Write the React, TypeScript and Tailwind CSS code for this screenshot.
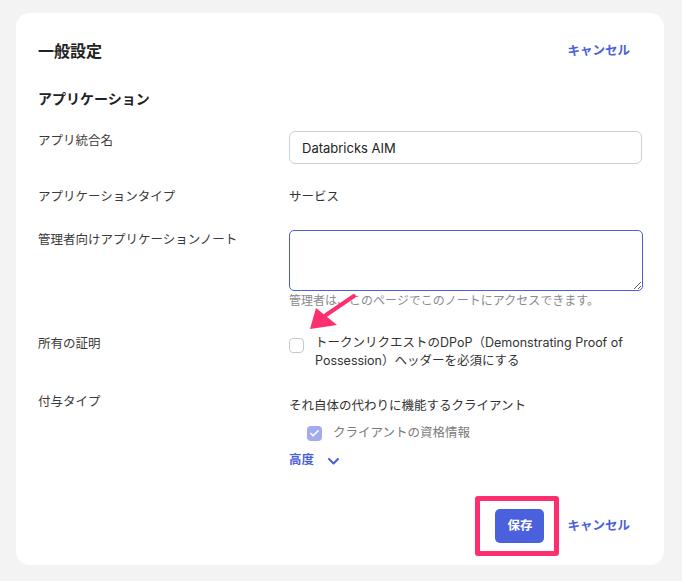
import { Check } from "lucide-react"

const font = { fontFamily: '"Inter", "Noto Sans CJK JP", sans-serif' }

function Label({ children }: { children: React.ReactNode }) {
  return <div className="text-[12.5px] leading-5 text-[#3a3a3a]">{children}</div>
}

export default function App() {
  return (
    <div className="min-h-[581px] bg-[#f3f3f3] pt-[13px] pb-[16px] px-[16px] text-[#2a2a2a]" style={font}>
      <div className="relative w-[648px] rounded-[14px] bg-white pt-[26px] pb-[9px] px-[22px]">
        {/* Header */}
        <div className="flex h-6 items-center justify-between pr-[12px]">
          <h1 className="text-[16px] font-bold leading-6 text-[#222]">一般設定</h1>
          <button className="text-[12.5px] font-bold text-[#4b5fd9]">キャンセル</button>
        </div>

        <h2 className="mt-[26px] text-[14px] font-bold leading-5 text-[#222]">アプリケーション</h2>

        <div className="mt-[22px] grid grid-cols-[251px_353px]">
          {/* App name */}
          <Label>アプリ統合名</Label>
          <input
            defaultValue="Databricks AIM"
            className="h-[33px] w-full rounded-[6px] border border-[#cfcfcf] px-[12px] text-[13px] text-[#222] outline-none"
          />

          {/* App type */}
          <div className="mt-[23px]">
            <Label>アプリケーションタイプ</Label>
          </div>
          <div className="mt-[23px] text-[12.5px] leading-5 text-[#333]">サービス</div>

          {/* Notes */}
          <div className="mt-[23px]">
            <Label>管理者向けアプリケーションノート</Label>
          </div>
          <div className="mt-[23px]">
            <textarea className="block h-[61px] w-[354px] rounded-[5px] border border-[#4b5fd9] px-[12px] py-[8px] text-[13px] outline-none" />
            <p className="mt-[2px] text-[12px] leading-4 text-[#8a8a8a]">
              管理者は、このページでこのノートにアクセスできます。
            </p>
          </div>

          {/* Proof of possession */}
          <div className="mt-[25px]">
            <Label>所有の証明</Label>
          </div>
          <div className="mt-[25px] flex items-start">
            <span className="mt-[4px] h-[15px] w-[15px] shrink-0 rounded-[4px] border border-[#c8c8c8] bg-white"></span>
            <p className="ml-[11px] text-[12.5px] leading-[18px] text-[#333]">
              トークンリクエストのDPoP（Demonstrating Proof of Possession）ヘッダーを必須にする
            </p>
          </div>

          {/* Grant type */}
          <div className="mt-[22px]">
            <Label>付与タイプ</Label>
          </div>
          <div className="mt-[26px]">
            <div className="text-[12.5px] leading-5 text-[#333]">それ自体の代わりに機能するクライアント</div>
            <div className="mt-[7px] ml-[18px] flex items-center">
              <span className="flex h-[15px] w-[15px] items-center justify-center rounded-[4px] bg-[#a3abef]">
                <Check className="h-[11px] w-[11px] text-white" strokeWidth={3.5} />
              </span>
              <span className="ml-[11px] text-[12.5px] leading-5 text-[#7a7a7a]">クライアントの資格情報</span>
            </div>
            <button className="mt-[7px] flex items-center text-[12.5px] font-semibold leading-5 text-[#4b5fd9]">
              高度
              <svg className="ml-[14px] mt-[2px]" width="11" height="7" viewBox="0 0 11 7" fill="none">
                <polyline points="1,1 5.5,5.5 10,1" stroke="#4b5fd9" strokeWidth="2" strokeLinecap="round" strokeLinejoin="round" />
              </svg>
            </button>
          </div>
        </div>

        {/* Footer */}
        <div className="mt-[26px] flex items-center justify-end pr-[12px]">
          <div className="rounded-[3px] border-[5px] border-[#ff2e6e] pl-[15px] pr-[10px] py-[8px]">
            <button className="h-[34px] w-[49px] rounded-[5px] bg-[#4b60dc] text-[12.5px] font-bold text-white">保存</button>
          </div>
          <button className="ml-[8px] text-[12.5px] font-bold text-[#4b5fd9]">キャンセル</button>
        </div>

        {/* Annotation arrow */}
        <svg className="pointer-events-none absolute left-[272px] top-[262px]" width="90" height="60" viewBox="0 0 90 60">
          <line x1="66" y1="21" x2="38" y2="40" stroke="#ff2e6e" strokeWidth="4" strokeLinecap="round" />
          <polygon points="22,54 28,33 49,50" fill="#ff2e6e" />
        </svg>
      </div>
    </div>
  )
}
